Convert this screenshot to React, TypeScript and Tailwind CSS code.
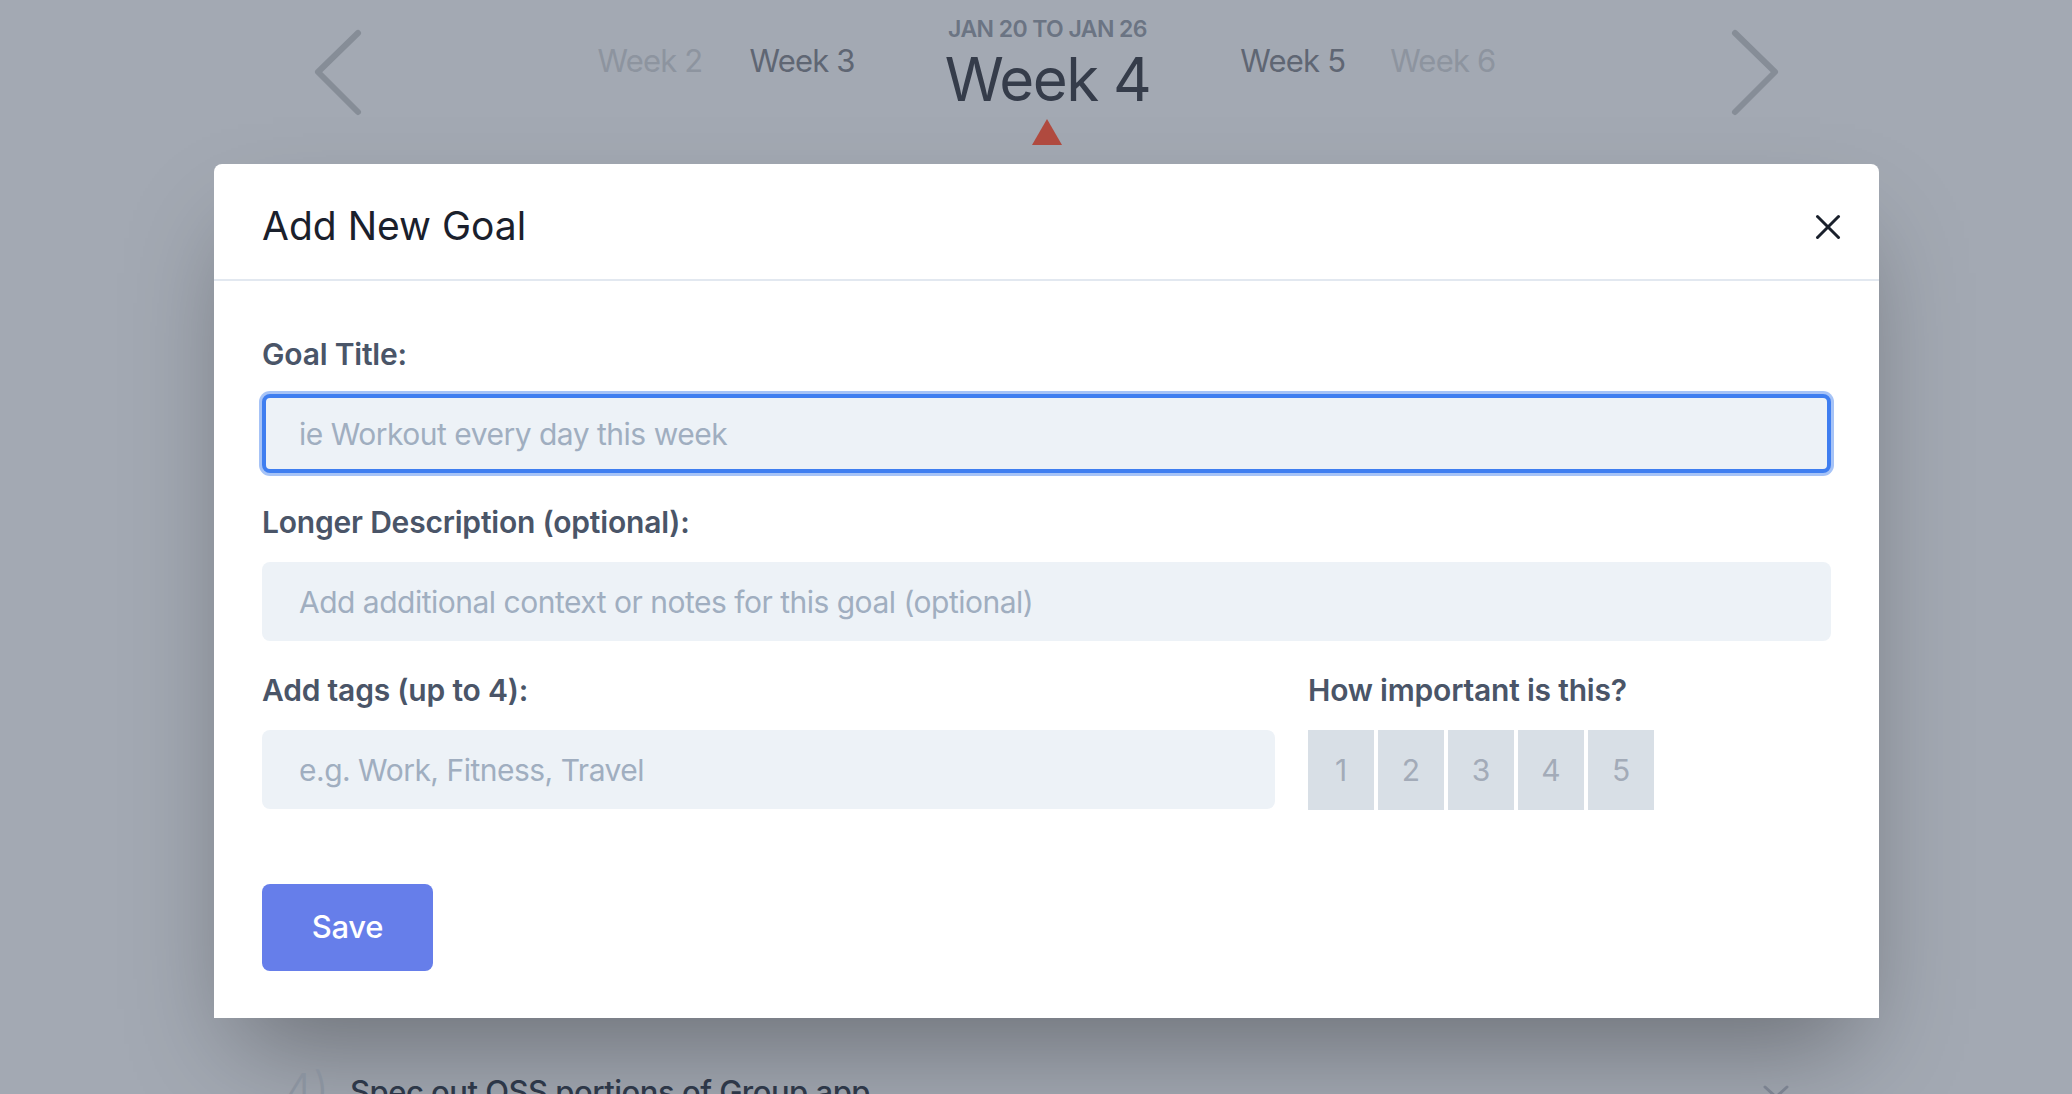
import { X } from "lucide-react";

const weeks = {
  far: "text-[#8d949f]",
  near: "text-[#5f6673]",
};

function Chevron({ dir }: { dir: "left" | "right" }) {
  const points = dir === "left" ? "46,8 6,47 46,87" : "6,8 46,47 6,87";
  return (
    <svg width="52" height="95" viewBox="0 0 52 95" className="mt-[25px] shrink-0">
      <polyline
        points={points}
        fill="none"
        stroke="#868d97"
        strokeWidth="6"
        strokeLinecap="round"
        strokeLinejoin="round"
      />
    </svg>
  );
}

function Field({
  label,
  placeholder,
  focused,
}: {
  label: string;
  placeholder: string;
  focused?: boolean;
}) {
  return (
    <div className="flex flex-col">
      <label className="mb-[16px] text-[30px] font-semibold leading-[48px] tracking-[-0.2px] text-[#4a5568]">
        {label}
      </label>
      <input
        placeholder={placeholder}
        className={
          focused
            ? "h-[79px] w-full rounded-lg border-4 border-[#3f7ef0] bg-[#edf2f7] pl-[33px] text-[30px] tracking-[-0.5px] text-[#2d3748] shadow-[0_0_0_3px_#a6c3f7] outline-none placeholder:text-[#a0aec0]"
            : "h-[79px] w-full rounded-lg border-4 border-transparent bg-[#edf2f7] pl-[33px] text-[30px] tracking-[-0.5px] text-[#2d3748] outline-none placeholder:text-[#a0aec0]"
        }
      />
    </div>
  );
}

export default function App() {
  return (
    <div className="h-[1094px] w-full overflow-hidden bg-[#a3a9b3] font-['Inter',sans-serif]">
      {/* week switcher */}
      <div className="flex h-[164px] pl-[312px] pr-[291px]">
        <Chevron dir="left" />
        <div className="flex flex-1 items-start justify-center pt-[17px]">
          <span className={`mt-[24px] text-[31px] leading-[40px] tracking-[-0.8px] ${weeks.far}`}>Week 2</span>
          <span className={`ml-[47px] mt-[24px] text-[31px] leading-[40px] tracking-[-0.8px] ${weeks.near}`}>Week 3</span>
          <div className="mx-[90px] flex flex-col items-center">
            <span className="text-[23px] font-semibold uppercase leading-[24px] tracking-tight text-[#6b7483]">
              Jan 20 to Jan 26
            </span>
            <span className="mt-[8px] text-[60px] leading-[60px] tracking-tight text-[#353c4a]">Week 4</span>
            <div className="mt-[10px] h-0 w-0 border-x-[15px] border-b-[26px] border-x-transparent border-b-[#b04a3f]" />
          </div>
          <span className={`mt-[24px] text-[31px] leading-[40px] tracking-[-0.8px] ${weeks.near}`}>Week 5</span>
          <span className={`ml-[45px] mt-[24px] text-[31px] leading-[40px] tracking-[-0.8px] ${weeks.far}`}>Week 6</span>
        </div>
        <Chevron dir="right" />
      </div>

      {/* modal */}
      <div className="ml-[214px] w-[1665px] rounded-t-lg bg-white shadow-[0_50px_100px_-24px_rgba(0,0,0,0.35)]">
        <div className="flex h-[117px] items-center justify-between border-b-2 border-[#e2e8f0] pl-12 pr-[30px]">
          <h2 className="mt-[8px] text-[39px] font-normal leading-[48px] text-[#1a202c]">Add New Goal</h2>
          <X size={42} strokeWidth={1.75} className="mt-[10px] text-[#1a202c]" />
        </div>

        <div className="flex flex-col px-12 pb-[47px] pt-[49px]">
          <Field label="Goal Title:" placeholder="ie Workout every day this week" focused />
          <div className="mt-[25px]">
            <Field
              label="Longer Description (optional):"
              placeholder="Add additional context or notes for this goal (optional)"
            />
          </div>
          <div className="mt-[25px] flex gap-[33px]">
            <div className="w-[1013px]">
              <Field label="Add tags (up to 4):" placeholder="e.g. Work, Fitness, Travel" />
            </div>
            <div className="flex flex-col">
              <span className="mb-[16px] text-[30px] font-semibold leading-[48px] tracking-[-0.2px] text-[#4a5568]">
                How important is this?
              </span>
              <div className="flex gap-[4px]">
                {[1, 2, 3, 4, 5].map((n) => (
                  <button
                    key={n}
                    className="flex h-[80px] w-[66px] items-center justify-center bg-[#d8dfe6] text-[30px] text-[#a3abb8]"
                  >
                    {n}
                  </button>
                ))}
              </div>
            </div>
          </div>
          <button className="mt-[74px] h-[87px] w-[171px] rounded-lg bg-[#667eea] text-[31px] font-medium tracking-[-0.3px] text-white">
            Save
          </button>
        </div>
      </div>

      {/* goal list peeking out below */}
      <div className="mt-[48px] flex items-start pl-[284px] pr-[282px]">
        <span className="w-[66px] text-[46px] font-light leading-[48px] text-[#8a929e]">4)</span>
        <span className="mt-[4px] text-[31px] font-medium leading-[44px] tracking-[-0.5px] text-[#2d3748]">
          Spec out OSS portions of Group app
        </span>
        <svg width="28" height="20" viewBox="0 0 28 20" className="ml-auto mt-[18px]">
          <polyline points="3,3 14,13 25,3" fill="none" stroke="#7b8290" strokeWidth="3" strokeLinecap="round" />
        </svg>
      </div>
    </div>
  );
}
